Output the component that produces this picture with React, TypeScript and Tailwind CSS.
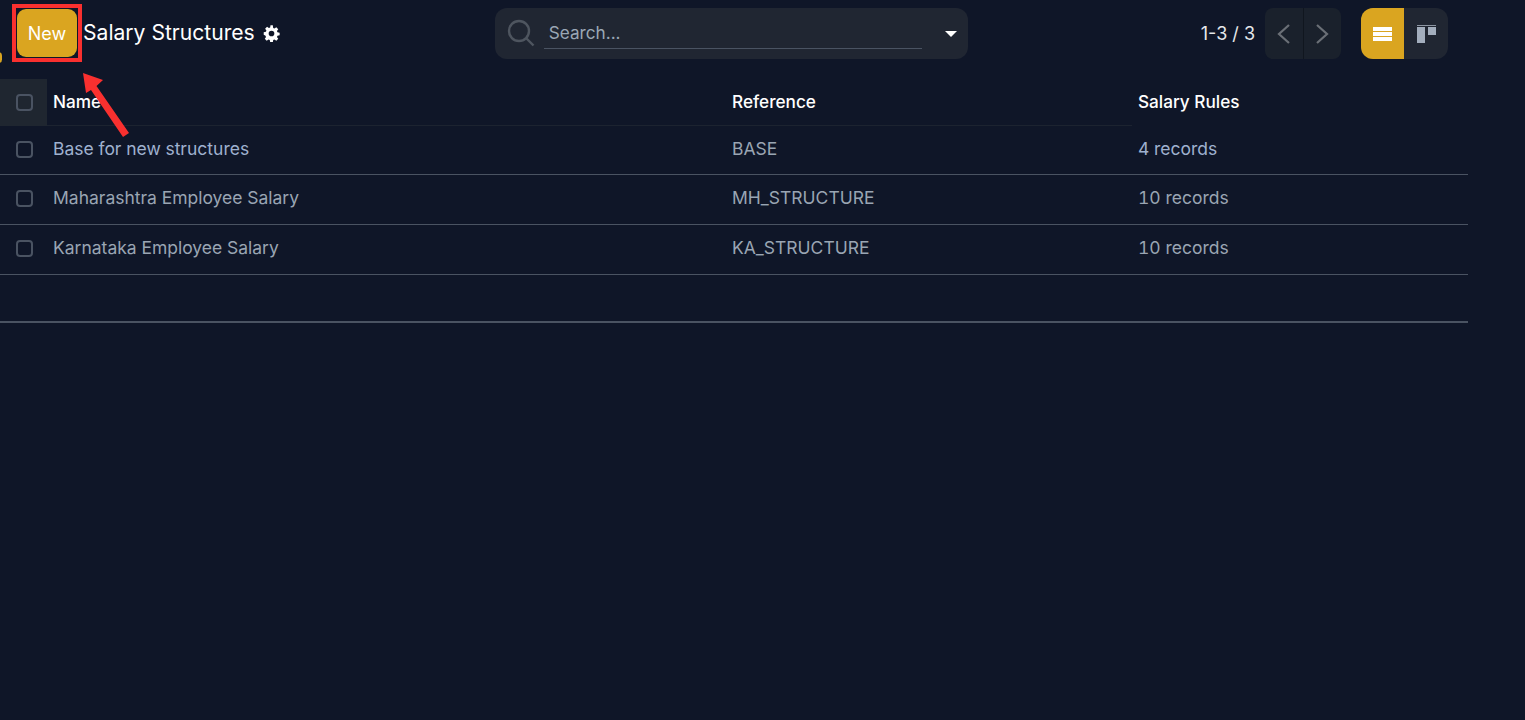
const rows = [
  { n: "Base for new structures", r: "BASE", s: "4 records", first: true },
  { n: "Maharashtra Employee Salary", r: "MH_STRUCTURE", s: "10 records" },
  { n: "Karnataka Employee Salary", r: "KA_STRUCTURE", s: "10 records" },
];

function Check() {
  return <span className="block w-[17px] h-[17px] rounded-[4px] border-2 border-[#4a5362] ml-[16px]" />;
}

export default function App() {
  return (
    <div className="relative min-h-[720px] bg-[#0f1628] overflow-hidden font-['Inter',sans-serif] text-[17.5px]">
      <header className="flex items-center h-[79px] pb-[20px] pt-[8px]">
        <button className="ml-[17px] mb-[1px] w-[60px] h-[48px] rounded-[9px] bg-[#daa520] text-white text-[18px] font-normal">New</button>
        <h1 className="ml-[6px] mb-[1px] text-white text-[21.1px] leading-none">Salary Structures</h1>
        <svg className="ml-[8px] mb-[1px]" width="17" height="17" viewBox="0 0 24 24" fill="#fff">
          <path fillRule="evenodd" d="M13.9 1l.5 3.1c.6.2 1.200.5 1.700.8l2.700-1.700 2.700 2.700-1.800 2.600c.3.600.6 1.200.7 1.800l3.100.5v3.800l-3.100.5c-.2.600-.4 1.200-.7 1.800l1.800 2.600-2.700 2.700-2.700-1.800c-.5.3-1.100.6-1.700.7l-.5 3.100h-3.800l-.5-3.100c-.6-.2-1.200-.4-1.800-.7l-2.600 1.800-2.700-2.700 1.800-2.600c-.3-.6-.6-1.200-.7-1.800L1 13.900v-3.800l3.100-.5c.2-.6.4-1.200.7-1.800L3 5.200l2.700-2.700 2.600 1.800c.6-.3 1.200-.6 1.800-.8l.5-3.100h3.300zM12 8a4 4 0 100 8 4 4 0 000-8z" />
        </svg>
        <div className="ml-[215px] w-[473px] h-[51px] rounded-[12px] bg-[#202632] flex items-center">
          <svg className="ml-[11px] mb-[1px]" width="29" height="29" viewBox="0 0 29 29" fill="none" stroke="#4e555f" strokeWidth="2.4">
            <circle cx="13" cy="12" r="10" />
            <path d="M20.500 19.500l7 7" />
          </svg>
          <div className="ml-[9px] mb-[2px] w-[378px] h-[32px] border-b border-[#4a5362] pl-[5px] text-[#9aa7b5] text-[17.2px] leading-[32px]">Search...</div>
          <span className="ml-[23px] w-0 h-0 border-x-[6px] border-x-transparent border-t-[6px] border-t-white" />
        </div>
        <span className="ml-auto text-[#e6e8eb] text-[18px]">1-3 / 3</span>
        <div className="ml-[10px] flex h-[51px] w-[76px] rounded-[8px] overflow-hidden bg-[#1a212c]">
          <div className="flex-1 flex items-center justify-center border-r border-[#10161f]">
            <svg width="16" height="22" viewBox="0 0 16 22" fill="none" stroke="#6a6f76" strokeWidth="2.200"><path d="M13 2L3 11l10 9" /></svg>
          </div>
          <div className="flex-1 flex items-center justify-center">
            <svg width="16" height="22" viewBox="0 0 16 22" fill="none" stroke="#6a6f76" strokeWidth="2.200"><path d="M3 2l10 9-10 9" /></svg>
          </div>
        </div>
        <div className="ml-[20px] mr-[77px] flex h-[51px] w-[87px] rounded-[12px] overflow-hidden bg-[#202632]">
          <div className="w-[43px] bg-[#daa520] flex items-center justify-center">
            <svg width="19" height="14" viewBox="0 0 19 14" fill="#fff">
              <rect width="19" height="4" />
              <rect y="5" width="19" height="4" />
              <rect y="10" width="19" height="4" />
            </svg>
          </div>
          <div className="flex-1 flex items-center justify-center">
            <svg width="19" height="18" viewBox="0 0 19 18">
              <rect width="19" height="1" fill="#8d96a3" />
              <rect y="2" width="8" height="16" fill="#a3aebd" />
              <rect x="11" y="2" width="8" height="8" fill="#a3aebd" />
            </svg>
          </div>
        </div>
      </header>

      <div className="w-[1468px] grid grid-cols-[47px_679px_406px_336px] tabular-nums">
        <div className="h-[47px] bg-[#1f2630] flex items-center"><Check /></div>
        <div className="h-[47px] border-b border-[#1c2330] pl-[6px] flex items-center text-white font-medium text-[17.2px]">Name</div>
        <div className="h-[47px] border-b border-[#1c2330] pl-[6px] flex items-center text-white font-medium text-[17.2px]">Reference</div>
        <div className="h-[47px] pl-[6px] pb-[1px] flex items-center text-white font-medium text-[17.2px]">Salary Rules</div>
        {rows.map((x) => (
          <div key={x.n} className={`col-span-4 ${x.first ? "h-[49px]" : "h-[50px]"} pb-[2px] grid grid-cols-subgrid items-center border-b border-[#4a5362]`}>
            <Check />
            <span className={`pl-[6px] ${x.first ? "text-[#9fb1cf]" : "text-[#9aa5b3]"}`}>{x.n}</span>
            <span className="pl-[6px] text-[#9aa5b3]">{x.r}</span>
            <span className={`pl-[6px] ${x.first ? "text-[#9fb1cf]" : "text-[#9aa5b3]"}`}>{x.s}</span>
          </div>
        ))}
        <div className="col-span-4 h-[48px] border-b-2 border-[#4a5362]" />
      </div>

      <div className="absolute left-[12px] top-[4px] w-[70px] h-[58px] border-[4px] border-[#f9302f]" />
      <span className="absolute left-[-5px] top-[52px] w-[7px] h-[11px] rounded-full bg-[#daa520]" />
      <svg className="absolute left-[78px] top-[68px]" width="56" height="72" viewBox="0 0 56 72" fill="#f9302f">
        <path d="M5 5l20 7-6.500 6L51 65l-6 4L13 22l-5 3z" />
      </svg>
    </div>
  );
}
